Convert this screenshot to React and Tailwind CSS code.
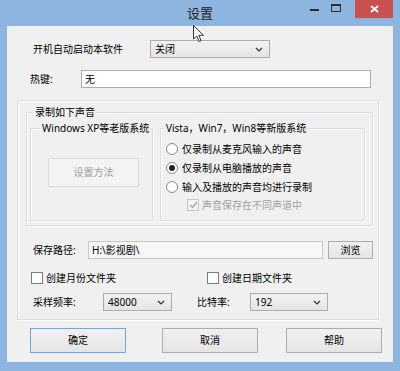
import React from 'react';

const FONT = "font-['Noto_Sans','Noto_Sans_CJK_SC',sans-serif]";

function Chevron() {
  return (
    <svg width="8" height="5" viewBox="0 0 8 5" className="shrink-0">
      <path d="M1 1 L4 4 L7 1" fill="none" stroke="#333" strokeWidth="1.2" />
    </svg>
  );
}

function Select({ value, w }) {
  return (
    <div className={`${w} h-[18px] flex items-center justify-between pl-[4px] pr-[6px] border border-[#acacac] bg-gradient-to-b from-[#f2f2f2] to-[#e5e5e5] text-black`}>
      <span className="leading-none">{value}</span>
      <Chevron />
    </div>
  );
}

function Btn({ children, w, focus }) {
  return (
    <div className={`${w} h-full flex items-center justify-center border ${focus ? 'border-[#6ea6e2]' : 'border-[#acacac]'} bg-gradient-to-b from-[#f0f0f0] to-[#e5e5e5] text-black`}>
      {children}
    </div>
  );
}

function Radio({ checked, label }) {
  return (
    <div className="h-[19px] flex items-center pl-[5px] gap-[4px]">
      <div className="w-[12px] h-[12px] rounded-full border border-[#8a8a8a] bg-white flex items-center justify-center">
        {checked && <div className="w-[6px] h-[6px] rounded-full bg-[#222]" />}
      </div>
      <span className="leading-none">{label}</span>
    </div>
  );
}

function Check({ label, disabled, checked }) {
  return (
    <div className="flex items-center gap-[3px]">
      <div className={`w-[12px] h-[12px] border flex items-center justify-center ${disabled ? 'border-[#c6c6c6] bg-[#f4f4f4]' : 'border-[#7a7a7a] bg-white'}`}>
        {checked && (
          <svg width="9" height="8" viewBox="0 0 9 8">
            <path d="M1 4 L3.5 6.5 L8 1" fill="none" stroke={disabled ? '#a8a8a8' : '#222'} strokeWidth="1.5" />
          </svg>
        )}
      </div>
      <span className={`leading-none ${disabled ? 'text-[#a0a0a0]' : 'text-black'}`}>{label}</span>
    </div>
  );
}

function Legend({ children, ml }) {
  return (
    <div className={`w-fit -mt-[8px] ${ml} px-[1px] bg-[#f0f0f0] leading-[14px] text-black whitespace-nowrap`}>
      {children}
    </div>
  );
}

export default function App() {
  return (
    <div className={`relative w-[400px] h-[371px] bg-[#8db5df] flex flex-col px-[7px] pb-[9px] text-[10px] ${FONT}`}>
      {/* title bar */}
      <div className="h-[26px] flex items-start shrink-0">
        <div className="flex-1" />
        <div className="text-[13px] text-[#222] leading-[26px]">设置</div>
        <div className="flex-1 flex justify-end items-start">
          <div className="w-[20px] h-[17px] flex items-center justify-center mr-[2px]">
            <div className="w-[9px] h-[2px] bg-[#2d2d2d] mt-[3px]" />
          </div>
          <div className="w-[20px] h-[17px] flex items-center justify-center mr-[9px]">
            <div className="w-[10px] h-[8px] border border-[#2d2d2d] border-t-2 mt-[-2px]" />
          </div>
          <div className="w-[38px] h-[18px] bg-[#c75050] flex items-center justify-center">
            <svg width="9" height="8" viewBox="0 0 9 8">
              <path d="M1 1 L8 7 M8 1 L1 7" stroke="white" strokeWidth="1.8" />
            </svg>
          </div>
        </div>
      </div>

      {/* client */}
      <div className="w-[386px] h-[336px] bg-[#f0f0f0] flex flex-col text-black">
        <div className="mt-[14px] h-[18px] flex items-center">
          <span className="ml-[26px] w-[117px]">开机自动启动本软件</span>
          <Select value="关闭" w="w-[120px]" />
        </div>

        <div className="mt-[12px] h-[18px] flex items-center">
          <span className="ml-[23px] w-[51px]">热键:</span>
          <div className="w-[290px] h-full border border-[#abadb3] bg-white flex items-center pl-[3px]">无</div>
        </div>

        {/* outer box */}
        <div className="mt-[12px] ml-[10px] w-[362px] h-[220px] border border-[#dcdcdc] shadow-[inset_1px_1px_0_#fff,1px_1px_0_#fff] flex flex-col">
          <div className="mt-[11px] ml-[8px] w-[347px] h-[114px] border border-[#dcdcdc] shadow-[inset_1px_1px_0_#fff,1px_1px_0_#fff] flex flex-col">
            <Legend ml="ml-[7px]">录制如下声音</Legend>
            <div className="mt-[9px] ml-[3px] flex gap-[7px]">
              <div className="w-[123px] h-[93px] border border-[#dcdcdc] shadow-[inset_1px_1px_0_#fff,1px_1px_0_#fff] flex flex-col">
                <Legend ml="ml-[10px]">Windows XP等老版系统</Legend>
                <div className="mt-[23px] ml-[17px] w-[91px] h-[29px] border border-[#d9d9d9] bg-[#f4f4f4] flex items-center justify-center text-[#a0a0a0]">
                  设置方法
                </div>
              </div>
              <div className="w-[205px] h-[93px] border border-[#dcdcdc] shadow-[inset_1px_1px_0_#fff,1px_1px_0_#fff] flex flex-col">
                <Legend ml="ml-[4px]">Vista，Win7，Win8等新版系统</Legend>
                <div className="mt-[4px] flex flex-col">
                  <Radio label="仅录制从麦克风输入的声音" />
                  <Radio checked label="仅录制从电脑播放的声音" />
                  <Radio label="输入及播放的声音均进行录制" />
                  <div className="h-[18px] flex items-center pl-[26px]">
                    <Check disabled checked label="声音保存在不同声道中" />
                  </div>
                </div>
              </div>
            </div>
          </div>

          <div className="mt-[15px] h-[18px] flex items-center">
            <span className="ml-[15px] w-[55px]">保存路径:</span>
            <div className="w-[235px] h-full border border-[#c8c8c8] bg-[#f7f7f7] flex items-center pl-[3px]">H:\影视剧\</div>
            <div className="ml-[5px] w-[45px] h-[18px]">
              <Btn w="w-full">浏览</Btn>
            </div>
          </div>

          <div className="mt-[12px] h-[14px] flex items-center">
            <div className="ml-[13px] w-[176px]">
              <Check label="创建月份文件夹" />
            </div>
            <Check label="创建日期文件夹" />
          </div>

          <div className="mt-[8px] h-[18px] flex items-center">
            <span className="ml-[15px] w-[70px]">采样频率:</span>
            <Select value="48000" w="w-[69px]" />
            <span className="ml-[25px] w-[53px]">比特率:</span>
            <Select value="192" w="w-[78px]" />
          </div>
        </div>

        <div className="mt-[8px] h-[25px] flex">
          <div className="ml-[23px] h-full"><Btn w="w-[96px]" focus>确定</Btn></div>
          <div className="ml-[36px] h-full"><Btn w="w-[96px]">取消</Btn></div>
          <div className="ml-[28px] h-full"><Btn w="w-[96px]">帮助</Btn></div>
        </div>
      </div>

      {/* mouse cursor */}
      <svg className="absolute left-[193px] top-[25px]" width="12" height="18" viewBox="0 0 12 18">
        <path d="M0.5 0.5 L0.5 14 L3.8 11 L6 16.5 L8 15.6 L5.8 10.3 L10.5 10.3 Z" fill="white" stroke="#333" strokeWidth="1" />
      </svg>
    </div>
  );
}
